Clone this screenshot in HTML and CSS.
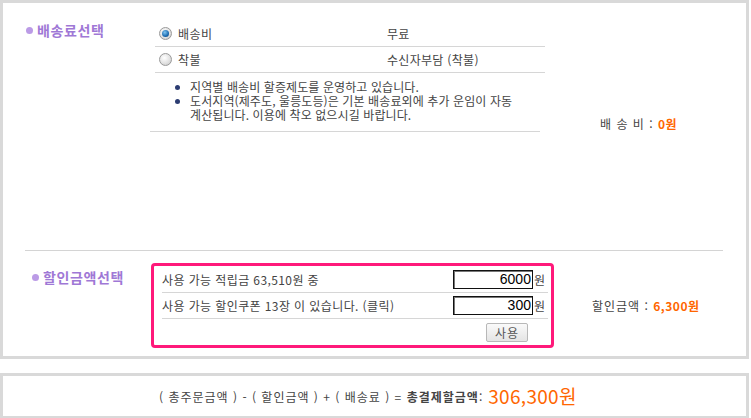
FILE: index.html
```html
<!DOCTYPE html>
<html lang="ko">
<head>
<meta charset="utf-8">
<title>주문</title>
<link rel="stylesheet" href="styles.css">
</head>
<body>
<div class="panel main">
  <div class="sec sec-ship">
    <div class="title"><span class="dot"></span>배송료선택</div>
    <div class="ship-body">
      <div class="opt-row">
        <span class="radio checked"></span><span class="opt-label">배송비</span><span class="opt-val">무료</span>
      </div>
      <div class="opt-row">
        <span class="radio"></span><span class="opt-label">착불</span><span class="opt-val">수신자부담 (착불)</span>
      </div>
      <ul class="notes">
        <li><span>지역별 배송비 할증제도를 운영하고 있습니다.</span></li>
        <li><span>도서지역(제주도, 울릉도등)은 기본 배송료외에 추가 운임이 자동<br>계산됩니다. 이용에 착오 없으시길 바랍니다.</span></li>
      </ul>
    </div>
    <div class="sum sum-ship">배 송 비 : <b>0원</b></div>
  </div>
  <div class="divider"></div>
  <div class="sec sec-disc">
    <div class="title title2"><span class="dot"></span>할인금액선택</div>
    <div class="disc-box">
      <div class="disc-row">
        <span class="disc-text">사용 가능 적립금 63,510원 중</span>
        <span class="amt">6000</span><span class="won">원</span>
      </div>
      <div class="disc-row">
        <span class="disc-text">사용 가능 할인쿠폰 13장 이 있습니다. (클릭)</span>
        <span class="amt">300</span><span class="won">원</span>
      </div>
      <div class="disc-row last">
        <span class="btn">사용</span>
      </div>
    </div>
    <div class="sum sum-disc">할인금액 : <b>6,300원</b></div>
  </div>
</div>
<div class="panel total">
  <span class="formula">( 총주문금액 ) - ( 할인금액 ) + ( 배송료 ) = <b>총결제할금액</b>:</span>
  <span class="grand">306,300원</span>
</div>
</body>
</html>
```
FILE: styles.css
```css
* { box-sizing: border-box; }
html, body { margin: 0; padding: 0; background: #fff; }
body {
  font-family: "Noto Sans CJK KR", "Noto Sans", sans-serif;
  font-size: 12px;
  color: #444;
  width: 751px;
  height: 418px;
  overflow: hidden;
}
.panel {
  width: 749px;
  border: 3px solid #d9d9d9;
  background: #fff;
}
.main { height: 359px; }
.sec { display: flex; }
.title {
  display: flex;
  align-items: center;
  color: #9f78d6;
  font-weight: bold;
  font-size: 14px;
  line-height: 18px;
  height: 18px;
  width: 147px;
  padding-left: 23px;
  margin-top: 18px;
  letter-spacing: 0.6px;
}
.title .dot {
  width: 7px;
  height: 7px;
  border-radius: 50%;
  background: #bb9be6;
  margin-right: 4px;
}
.ship-body {
  width: 395px;
  margin-top: 18px;
}
.opt-row {
  display: flex;
  align-items: center;
  height: 26px;
  margin-left: 5px;
  border-bottom: 1px solid #d6d6d6;
  padding-left: 4px;
  line-height: 14px;
}
.radio {
  width: 13px;
  height: 13px;
  border-radius: 50%;
  border: 1px solid #9a9a9a;
  background: radial-gradient(circle at 40% 35%, #ffffff 0%, #e2e2e2 55%, #c4c4c4 100%);
  display: flex;
  align-items: center;
  justify-content: center;
}
.radio.checked::after {
  content: "";
  width: 7px;
  height: 7px;
  border-radius: 50%;
  background: radial-gradient(circle at 40% 35%, #7fc4f0 0%, #1b6bb0 60%, #0b3d6e 100%);
}
.opt-label { margin-left: 6px; width: 209px; letter-spacing: 0.5px; }
.opt-val { letter-spacing: 0.3px; }
.notes {
  list-style: none;
  margin: 0 5px 0 0;
  padding: 7px 0 9px 0;
  border-bottom: 1px solid #d6d6d6;
  line-height: 14px;
  letter-spacing: 0.1px;
}
.notes li { display: flex; }
.notes li::before {
  content: "";
  flex: none;
  width: 5px;
  height: 5px;
  border-radius: 50%;
  background: #2c3d72;
  margin: 5px 10px 0 25px;
}
.sum {
  line-height: 14px;
  letter-spacing: 1px;
}
.sum b { color: #ff6600; letter-spacing: 0.5px; }
.sum-ship {
  align-self: flex-end;
  margin-left: 55px;
  margin-bottom: 1px;
}
.divider {
  margin: 118px 0 0 22px;
  width: 698px;
  height: 1px;
  background: #d4d4d4;
}
.sec-disc { margin-top: 12px; }
.title2 {
  margin-top: 5px;
  padding-left: 29px;
  width: 148px;
}
.disc-box {
  width: 403px;
  height: 85px;
  border: 3px solid #ff197a;
  border-radius: 4px;
  padding-top: 1px;
}
.disc-row {
  display: flex;
  align-items: center;
  height: 26px;
  margin: 0 3px 0 8px;
  border-bottom: 1px solid #d6d6d6;
  padding-right: 3px;
  line-height: 14px;
}
.disc-row.last {
  border-bottom: none;
  justify-content: flex-end;
  height: 27px;
  padding-right: 20px;
}
.disc-text { flex: 1; letter-spacing: 0.4px; }
.amt {
  width: 80px;
  height: 19px;
  border: 1px solid #111;
  box-shadow: inset 1px 1px 0 #777;
  text-align: right;
  padding-right: 1px;
  line-height: 17px;
  font-size: 14px;
  color: #000;
  font-family: "Liberation Sans", sans-serif;
}
.won { margin-left: 1px; }
.btn {
  width: 42px;
  height: 19px;
  border: 1px solid #b8b8b8;
  border-radius: 2px;
  background: linear-gradient(#fafafa, #e4e4e4);
  color: #555;
  text-align: center;
  line-height: 17px;
  letter-spacing: 1px;
}
.sum-disc {
  align-self: center;
  margin-left: 38px;
  margin-top: 1px;
}
.total {
  margin-top: 14px;
  height: 46px;
  display: flex;
  align-items: center;
  padding-left: 156px;
}
.formula { line-height: 14px; margin-top: 1px; letter-spacing: 1px; }
.formula b { color: #444; }
.grand {
  color: #ff6600;
  font-size: 19px;
  line-height: 22px;
  margin-left: 5px;
  letter-spacing: 0.3px;
}
```
